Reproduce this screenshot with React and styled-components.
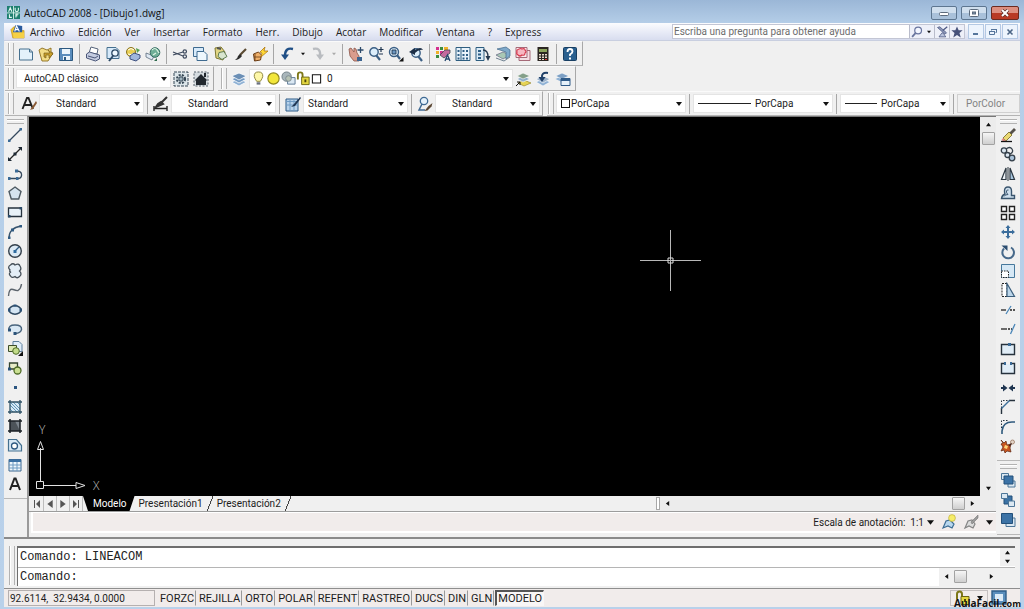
/// imports

import React, { useState } from "react";
import styled, { createGlobalStyle, css } from "styled-components";

const ui = `Roboto, "Liberation Sans", sans-serif`;
const segoe = `"Open Sans", "Noto Sans", sans-serif`;

const GlobalStyle = createGlobalStyle`
  * {
    box-sizing: border-box;
  }
  body {
    margin: 0;
    background: #b9d1ea;
    font-family: ${ui};
    font-size: 10px;
    color: #1c1c1c;
  }
  button, input, select {
    font: inherit;
    color: inherit;
    margin: 0;
    padding: 0;
    border: 0;
    border-radius: 0;
    background: none;
    outline: none;
  }
`;

// every drawing lives in a 16x16 box
const icons = {
  logo: (
    <>
      <rect width="16" height="16" fill="#1d7f70" />
      <path d="M8 0v16M0 8.500h16" stroke="#e6fbf5" strokeWidth="1" />
      <path d="M2 7l2-5 2 5M10 2v3q0 2 2 2t2-2V2M3 10v4h3M11 14v-4h3M11 12h2" stroke="#e6fbf5" strokeWidth="1.300" fill="none" />
    </>
  ),
  doc: (
    <>
      <path d="M1 6l3-3h3l3 4h5v8H3z" fill="#f0c52c" stroke="#b8860f" strokeWidth=".6" />
      <path d="M3 9l3-8 7 1v7z" fill="#2a5b9e" />
      <path d="M5 8l2-6 3 6M6 6h3" stroke="#fff" fill="none" strokeWidth="1.200" />
      <path d="M3 9h12v6H4z" fill="#f5d046" />
    </>
  ),
  new: <path d="M1.500 3h10l3 3v8h-13zM11.500 3v3h3" fill="#e3f1fb" stroke="#46708f" />,
  open: (
    <>
      <path d="M1 4l3-2 5 2 4-2v4l2 1-5 8H4z" fill="#f2dc86" stroke="#8c6d1e" strokeWidth=".9" />
      <path d="M6 11V7h6l-2-3 5 4-4 4V9H8v3z" fill="#c89f2a" stroke="#6d5415" strokeWidth=".6" />
    </>
  ),
  save: (
    <>
      <path d="M1.500 2.500h13v12h-13z" fill="#5a8dbd" stroke="#2c587f" />
      <path d="M4 3h8v5H4zM5 10h7v4H5z" fill="#eaf4fb" />
      <path d="M6 11h2v3H6z" fill="#2c587f" />
    </>
  ),
  print: (
    <>
      <path d="M4 7l2-6 7 2-1 5z" fill="#fff" stroke="#55637a" />
      <path d="M1.500 8l3-2 10 3v4l-4 2-9-3z" fill="#c3cbe0" stroke="#4a5678" />
      <path d="M3 10l7 2 3-2" stroke="#4a5678" fill="none" />
    </>
  ),
  preview: (
    <>
      <path d="M2 1.500h9l3 3v8H2z" fill="#d7eafa" stroke="#46708f" />
      <circle cx="10" cy="7" r="3.200" fill="#eef8ff" stroke="#2d4a66" strokeWidth="1.300" />
      <path d="M8 10l-4 5" stroke="#2d4a66" strokeWidth="2" />
    </>
  ),
  publish: (
    <>
      <circle cx="6" cy="6" r="4.500" fill="#e9cf52" stroke="#8a7420" />
      <path d="M3 4q3-3 6 0M3 8q3 2 6-1" stroke="#fff" fill="none" />
      <path d="M5 10l4-3 6 2v3l-4 3-6-2z" fill="#9fb6dc" stroke="#3c4f7e" />
      <path d="M11 2l4 2-3 3z" fill="#56a04e" />
    </>
  ),
  globe: (
    <>
      <path d="M1 7l8 3-2 4-6-3z" fill="#dfe9f3" stroke="#5a6b7c" strokeWidth=".8" />
      <circle cx="10" cy="6.500" r="4.800" fill="#6fae97" stroke="#356b62" />
      <path d="M7 4q3-3 5 0t2 3M8 9l3-2" stroke="#dff3e4" fill="none" strokeWidth="1.200" />
      <path d="M9 15l3-3v3z" fill="#2f6a4d" />
    </>
  ),
  cut: (
    <>
      <path d="M1 6l10 4M1 9l10-3" stroke="#3e4a5e" strokeWidth="1.200" />
      <circle cx="12.800" cy="5.500" r="1.700" fill="none" stroke="#3e4a5e" strokeWidth="1.200" />
      <circle cx="12.800" cy="10.500" r="1.700" fill="none" stroke="#3e4a5e" strokeWidth="1.200" />
    </>
  ),
  copy: (
    <>
      <path d="M1.500 1.500h10v9h-10z" fill="#d7eafa" stroke="#3f6b90" />
      <path d="M5 5.500h7l3 3v6H5z" fill="#eef7fd" stroke="#3f6b90" />
    </>
  ),
  paste: (
    <>
      <path d="M3 2l6-1 4 5-2 8-7-2z" fill="#e2d684" stroke="#7d7630" />
      <path d="M5 2l4 1" stroke="#555" strokeWidth="2" />
      <path d="M7 6.500l5-1 3 5-5 3-4-3z" fill="#d8e5cf" stroke="#5d7a50" />
    </>
  ),
  brush: (
    <>
      <path d="M14 3L8 9" stroke="#5b4a32" strokeWidth="2.200" />
      <path d="M8 8l2 2q-3 4-7 4 3-2 3-4z" fill="#2b2b2b" />
    </>
  ),
  bolt: (
    <>
      <path d="M1.500 8l5-2 3 3-1 5-6 1z" fill="#efb06a" stroke="#6a3c14" />
      <path d="M3 8v7M2 11h7" stroke="#6a3c14" strokeWidth=".8" />
      <path d="M8 6l5-5-1 4h4l-7 6 1-4z" fill="#ffd937" stroke="#b07812" strokeWidth=".8" />
    </>
  ),
  undo: (
    <>
      <path d="M14 3Q6 1 6 10" fill="none" stroke="#1f4f86" strokeWidth="2.400" />
      <path d="M2 8.500h8L6 14z" fill="#1f4f86" />
    </>
  ),
  redo: (
    <>
      <path d="M3 3q8-2 7 7" fill="none" stroke="#b9bcc0" strokeWidth="2.400" />
      <path d="M14 8.500H6l4 5.500z" fill="#b9bcc0" />
    </>
  ),
  pan: (
    <>
      <path d="M1 3l2-1 3 4V2l2 1 1 4 2 3v5H6L2 10z" fill="#d99c8d" stroke="#8c5448" strokeWidth=".8" />
      <path d="M12.500 1v6M9.500 4h6" stroke="#2c4a6b" strokeWidth="1.300" />
      <path d="M9 11h5v4H9z" fill="#3a638f" />
    </>
  ),
  zoomRt: (
    <>
      <circle cx="6" cy="6" r="4.200" fill="#dceefb" stroke="#3b5f84" strokeWidth="1.400" />
      <path d="M8 9l4 5" stroke="#3b5f84" strokeWidth="2.200" />
      <path d="M13 1v5M10.500 3.500h5M11 8h4" stroke="#1f3550" strokeWidth="1.200" />
    </>
  ),
  zoomWin: (
    <>
      <circle cx="6" cy="6" r="4.500" fill="#dceefb" stroke="#3b5f84" strokeWidth="1.400" />
      <path d="M4 4h4v4H4z" fill="#6b96c0" stroke="#1f3550" strokeWidth=".9" />
      <path d="M9 9l3 4" stroke="#3b5f84" strokeWidth="2.200" />
      <path d="M15.500 11v4.500H11z" />
    </>
  ),
  zoomPrev: (
    <>
      <circle cx="8" cy="7" r="4.200" fill="#dceefb" stroke="#3b5f84" strokeWidth="1.400" />
      <path d="M10 10l4 5" stroke="#3b5f84" strokeWidth="2.200" />
      <path d="M1 6l6-4v2q6-4 8 0-4-1-8 3v2z" fill="#1c2f47" />
    </>
  ),
  props: (
    <>
      <path d="M1 1h3v3H1zM5 5h3v3H5z" fill="#d42f8e" />
      <path d="M5 1h3v3H5zM1 9h3v3H1z" fill="#3b8c3f" />
      <path d="M9 1h4v3H9zM1 5h3v3H1z" fill="#f0b228" />
      <path d="M5 9l5-5h5v3l-6 5z" fill="#c46a9d" stroke="#40474f" strokeWidth=".8" />
      <path d="M10 15l2.500-6 2.500 6M11 13h3" stroke="#26476e" fill="none" strokeWidth="1.300" />
    </>
  ),
  center: (
    <>
      <path d="M1 1.500h14v13H1z" fill="#e9f3fb" stroke="#2e5e80" />
      <path d="M6 2v12" stroke="#2e5e80" />
      <path d="M2.500 4h2v2h-2zM2.500 8h2v2h-2zM7.500 4h2v2h-2zM11 4h2v2h-2zM7.500 8h2v2h-2zM11 8h2v2h-2zM7.500 11.500h2v2h-2zM11 11.500h2v2h-2zM2.500 11.500h2v2h-2z" fill="#2f5f86" />
    </>
  ),
  palettes: (
    <>
      <path d="M1 1.500h8v13H1z" fill="#dcebf6" stroke="#2e5e80" />
      <path d="M3 4h3v2H3zM3 7.500h3v2H3zM3 11h3v2H3z" fill="#2f5f86" />
      <path d="M8 4q5 0 5 7" fill="none" stroke="#24384e" strokeWidth="1.300" />
      <path d="M10.500 10h5L13 15z" fill="#24384e" />
    </>
  ),
  sheets: (
    <>
      <path d="M1 9l7-3 7 3-7 4z" fill="#a9c7b5" stroke="#557" strokeWidth=".6" />
      <path d="M2 3l9-2 4 3v6l-4 3V6z" fill="#7fa9ca" stroke="#42688a" strokeWidth=".7" />
      <path d="M1 12l8 3 6-4" stroke="#6f8190" fill="none" />
    </>
  ),
  markup: (
    <>
      <path d="M4 4.500h11v10H4z" fill="#f5dfe4" stroke="#a56a78" />
      <path d="M1 1.500h11v10H1z" fill="#fbecef" stroke="#a56a78" />
      <path d="M4 3q2-1 3 0 3-1 3 1 2 2 0 3 0 3-3 2-2 2-4 0-2-1-1-3-1-2 2-3z" fill="#f7b8c2" stroke="#d63b50" strokeWidth="1.200" />
    </>
  ),
  calc: (
    <>
      <path d="M2.500 1h11v14h-11z" fill="#2b2622" />
      <path d="M4 3h8v3H4z" fill="#8ba35c" />
      <path d="M4 8h2v1.500H4zM7 8h2v1.500H7zM10 8h2v1.500h-2zM4 10.500h2V12H4zM7 10.500h2V12H7zM10 10.500h2V12h-2zM4 13h2v1H4zM7 13h2v1H7z" fill="#e8ddcf" />
      <path d="M10 13h2v1h-2z" fill="#d33" />
    </>
  ),
  help: (
    <>
      <rect x="1.500" y="1.500" width="13" height="13" rx="1" fill="#2a608f" stroke="#183f63" />
      <path d="M5.500 6q0-3 2.500-3t2.500 2.500Q10.500 7 8 8.500V10" stroke="#fff" strokeWidth="1.800" fill="none" />
      <path d="M7 11.500h2v2H7z" fill="#fff" />
    </>
  ),
  gear: (
    <>
      <path d="M1 1h14v14H1z" fill="#dde6ea" stroke="#344654" strokeDasharray="3 1" />
      <circle cx="8" cy="8" r="4" fill="none" stroke="#344654" strokeWidth="2.200" strokeDasharray="2 1.200" />
      <circle cx="8" cy="8" r="2.200" fill="#9fb4bf" stroke="#344654" />
    </>
  ),
  home: (
    <>
      <path d="M1 1h14v14H1z" fill="#d5dbdf" stroke="#56616a" strokeDasharray="2 1.500" />
      <path d="M2 9l6-6 6 6-1 1v4H3v-4z" fill="#22282e" />
      <path d="M11 2h2v4h-2z" fill="#22282e" />
    </>
  ),
  layers: (
    <>
      <path d="M0.500 11l7.500-3 7.500 3-7.500 4z" fill="#8fb1d4" stroke="#fff" strokeWidth=".8" />
      <path d="M0.500 8l7.500-3 7.500 3-7.500 4z" fill="#7199c2" stroke="#fff" strokeWidth=".8" />
      <path d="M0.500 5l7.500-3 7.500 3-7.500 4z" fill="#6b8fb5" stroke="#fff" strokeWidth=".8" />
    </>
  ),
  layerCur: (
    <>
      <path d="M3 12l6-3 7 3-7 3z" fill="#e6d354" stroke="#8d7d20" strokeWidth=".6" />
      <path d="M2 8l6-3 7 3-7 3z" fill="#8faec9" stroke="#fff" strokeWidth=".6" />
      <path d="M2 5l6-3 7 3-7 3z" fill="#84a08a" stroke="#fff" strokeWidth=".6" />
      <path d="M1 15l4-4M2 11h3v3" stroke="#111" fill="none" />
    </>
  ),
  layerPrev: (
    <>
      <path d="M1 11l7-3 7 3-7 4z" fill="#8fb1d4" stroke="#fff" strokeWidth=".6" />
      <path d="M1 8l7-3 7 3-7 4z" fill="#9db3cb" stroke="#fff" strokeWidth=".6" />
      <path d="M13 2Q6 1 7 7" fill="none" stroke="#1f4069" strokeWidth="2" />
      <path d="M3.500 6h7L7 11z" fill="#1f4069" />
    </>
  ),
  layerState: (
    <>
      <path d="M0.500 8l6.500-3 7 3-7 3z" fill="#8fb1d4" />
      <path d="M0.500 5l6.500-3 7 3-7 3z" fill="#7c9fc4" stroke="#fff" strokeWidth=".6" />
      <path d="M6 7.500h9v7H6z" fill="#e6f1fa" stroke="#2e5a88" />
      <path d="M6 8h9v2H6z" fill="#2e5a88" />
    </>
  ),
  bulb: (
    <>
      <path d="M8 1q5 0 4.500 5Q12 8 10 11H6Q4 8 3.500 6 3 1 8 1z" fill="#fdf7a8" stroke="#8b8237" />
      <path d="M6 12h4v2.500H6z" fill="#6b7280" />
    </>
  ),
  sun: <circle cx="8" cy="8" r="6" fill="#f2e63a" stroke="#8f861c" strokeWidth="1.200" />,
  freeze: (
    <>
      <circle cx="6" cy="6" r="5" fill="#a9b6bb" stroke="#718087" />
      <path d="M7 7h8v7H7z" fill="#dbe8f3" stroke="#5d7894" />
      <circle cx="8" cy="8" r="3" fill="#b7c3b5" stroke="#718087" strokeWidth=".8" />
    </>
  ),
  lock: (
    <>
      <path d="M2 9V4q0-2.500 2.500-2.500T7 4v3" fill="none" stroke="#7d7718" strokeWidth="2" />
      <path d="M6 6.500h8v8H6z" fill="#e3d640" stroke="#6c6612" />
      <path d="M9 9h2v3H9z" fill="#4d480b" />
    </>
  ),
  swatch: <path d="M2 2.500h12v12H2z" fill="#fff" stroke="#111" strokeWidth="1.500" />,
  textStyle: (
    <>
      <path d="M1.500 13L6 2h1.500L12 13M3.500 9h6.500" fill="none" stroke="#222" strokeWidth="1.900" />
      <path d="M15 5l-4 6-2 3 3-1 4-6z" fill="#8a5a34" />
    </>
  ),
  dimStyle: (
    <>
      <path d="M1 10v5M14 10v5M1 12.500h13" stroke="#222" strokeWidth="1.400" />
      <path d="M14 1L8 7M8 6l2 2-7 3 2-3z" stroke="#333" strokeWidth="2" fill="#333" />
    </>
  ),
  tableStyle: (
    <>
      <path d="M1 3h12v12H1z" fill="#b8d2ea" stroke="#2d5a86" />
      <path d="M1 5.500h12M1 9h12M5 3v12M9 3v12" stroke="#6f9bc4" />
      <path d="M15 1L9 8l-3 3 4-1 6-8z" fill="#1e3552" />
    </>
  ),
  leaderStyle: (
    <>
      <circle cx="7" cy="5" r="3.700" fill="#e4f1fb" stroke="#3f6a94" strokeWidth="1.300" />
      <path d="M5 8l-3 6h6" stroke="#3f6a94" strokeWidth="1.500" fill="none" />
      <path d="M15.500 7l-4 3-4 5 3-.5 4-4z" fill="#5a4632" />
    </>
  ),
  line: (
    <>
      <path d="M2 14L14 2" stroke="#33475c" strokeWidth="1.300" />
      <path d="M1 12.500h2.500V15H1zM12.500 1H15v2.500h-2.500z" fill="#3a6a96" />
    </>
  ),
  xline: (
    <>
      <path d="M2 14L14 2" stroke="#222" strokeWidth="1.300" />
      <path d="M1 15v-4l4 4zM15 1v4l-4-4zM6.500 6.500h3v3h-3z" fill="#1d2833" />
    </>
  ),
  pline: (
    <>
      <path d="M1 12.500h11q3-1 2.500-4.500-.5-3-5-3" fill="none" stroke="#33475c" strokeWidth="1.300" />
      <path d="M1 11h2.500v3H1zM9 11h2.500v3H9zM8 3.500h3v3H8z" fill="#3a6a96" />
    </>
  ),
  polygon: <path d="M8 2l6 4.500-2.300 7.500H4.300L2 6.500z" fill="#d5e3ee" stroke="#4d5961" strokeWidth="1.400" />,
  rect: (
    <>
      <path d="M1.500 4h13v8.500h-13z" fill="#e8f1f8" stroke="#26323d" strokeWidth="1.300" />
      <path d="M1 11h2.500v2.500H1zM12.500 3H15v2.500h-2.500z" fill="#2b4a68" />
    </>
  ),
  arc: (
    <>
      <path d="M2 14Q2 4 14 2" fill="none" stroke="#3a556e" strokeWidth="1.400" />
      <path d="M1 12.500h2.500V15H1zM4 4.500h3v3H4zM12.500 1H15v2.500h-2.500z" fill="#2f5a82" />
    </>
  ),
  circle: (
    <>
      <circle cx="8" cy="8" r="6.300" fill="#dbe9f4" stroke="#333f4a" strokeWidth="1.400" />
      <path d="M8 8l4-4" stroke="#2f5a82" strokeWidth="1.300" />
      <path d="M6.500 7h3v3h-3z" fill="#2f6ca0" />
    </>
  ),
  cloud: <path d="M3 7Q0 4 3.500 2 6-.5 8 2q4-2 5 1 2 3-.5 5 3 3 0 5.500-2.500 2.500-4.500 0Q5 15.500 3.500 13 1 10.500 4 9 2 9 3 7z" fill="#e4eef6" stroke="#454f58" strokeWidth="1.300" />,
  spline: <path d="M1.500 14Q2 6 6 7.500t5 1q3-2 3.500-6.500" fill="none" stroke="#5c646c" strokeWidth="1.400" />,
  ellipse: (
    <>
      <ellipse cx="8" cy="8" rx="6" ry="4.200" fill="#d4e5f3" stroke="#2e4860" strokeWidth="1.500" />
      <path d="M1 6.500h2.500v3H1zM12.500 6.500H15v3h-2.500zM6.500 2.500h3v2h-3z" fill="#2a5279" />
    </>
  ),
  earc: (
    <>
      <path d="M2 9Q1 4 8 4q7 0 6.500 4.500Q14 12 8 12.500" fill="#d9e8f4" stroke="#48637c" strokeWidth="1.500" />
      <path d="M1 7.500h3v3H1zM6.500 11h3v3h-3z" fill="#2a5279" />
    </>
  ),
  insert: (
    <>
      <path d="M6 1.500h6l3 3v7H6z" fill="#e0eefa" stroke="#5d7f9d" />
      <path d="M1.500 5.500h8v6h-8z" fill="#dbe8b0" stroke="#3d4d2a" />
      <circle cx="9" cy="11" r="3.300" fill="#c3dc8a" stroke="#4d6a26" />
      <path d="M16 11v5h-5z" />
    </>
  ),
  block: (
    <>
      <path d="M2.500 3h8v6h-8z" fill="#e7ecc8" stroke="#33442f" strokeWidth="1.300" />
      <circle cx="10.500" cy="10.500" r="3.500" fill="#cbe093" stroke="#4d6a26" strokeWidth="1.300" />
      <path d="M1 7.500h3v3H1z" fill="#2a5279" />
    </>
  ),
  point: <path d="M7 7h3v3H7z" fill="#2a5580" />,
  hatch: (
    <>
      <path d="M3 3h10v10H3z" fill="#d6e8f4" />
      <path d="M3 6l7 7M3 3l10 10M6 3l7 7M3 10l3 3M10 3l3 3" stroke="#5f97bb" />
      <path d="M3 1v14M13 1v14M1 3h14M1 13h14" stroke="#2f5266" strokeWidth="1.300" />
    </>
  ),
  gradient: (
    <>
      <path d="M3 3h10v10H3z" fill="#4c5359" />
      <path d="M8 3h5v10z" fill="#7c858d" />
      <path d="M3 1v14M13 1v14M1 3h14M1 13h14" stroke="#1b2126" strokeWidth="1.500" />
    </>
  ),
  region: (
    <>
      <path d="M1.500 2.500h8l5 6v5.500h-13z" fill="#d7e8f5" stroke="#44708f" strokeWidth="1.200" />
      <circle cx="7.500" cy="9" r="3" fill="#fff" stroke="#2f5a82" strokeWidth="1.300" />
    </>
  ),
  table: (
    <>
      <path d="M2 2.500h12v11.500H2z" fill="#eef6fc" stroke="#3a678f" />
      <path d="M2 2.500h12v2.500H2z" fill="#3a70a3" />
      <path d="M2 8h12M2 11h12M6 5v9M10 5v9" stroke="#6e9bc2" />
    </>
  ),
  mtext: <path d="M3 14L7.400 2.500h1.200L13 14M5 10h6" fill="none" stroke="#222" strokeWidth="2" />,
  erase: (
    <>
      <path d="M14 1L9 6l2 2 5-5z" fill="#55504a" />
      <path d="M9 5L3 11l3 3 6-6z" fill="#ead973" stroke="#6e6120" strokeWidth=".8" />
      <path d="M3 11l3 3H3L1.500 13z" fill="#e48b83" />
      <path d="M1 14.500h11" stroke="#111" strokeWidth="1.300" />
    </>
  ),
  copyObj: (
    <>
      <circle cx="4" cy="4.500" r="2.700" fill="#dbe6f0" stroke="#35404a" strokeWidth="1.300" />
      <path d="M6 3q4-3 6 0t-2 5" fill="none" stroke="#35404a" strokeWidth="1.300" />
      <circle cx="7.500" cy="9" r="2.500" fill="#dbe6f0" stroke="#35404a" strokeWidth="1.300" />
      <circle cx="12" cy="12" r="2.800" fill="#aac3da" stroke="#35404a" strokeWidth="1.300" />
    </>
  ),
  mirror: (
    <>
      <path d="M6 2v11.500H1.500z" fill="#eef3f7" stroke="#2b3640" strokeWidth="1.200" />
      <path d="M10 2v11.500h4.500z" fill="#a8c6df" stroke="#2b3640" strokeWidth="1.200" />
      <path d="M8 1v14" stroke="#2b3640" />
    </>
  ),
  offset: (
    <>
      <path d="M1.500 13.500h13v-3h-3V6q0-4-3.500-4T4.500 6q0 2 .5 3-3 1-3.500 4.500z" fill="#cfe0ee" stroke="#3a556e" strokeWidth="1.400" />
      <path d="M4 11.500q1-2 4-2Q6 8 6.500 6q.5-1.500 2-1" fill="none" stroke="#3a556e" />
    </>
  ),
  array: <path d="M1.500 1.500h5v5h-5zM9.500 1.500h5v5h-5zM1.500 9.500h5v5h-5zM9.500 9.500h5v5h-5z" fill="#fff" stroke="#222" strokeWidth="1.400" />,
  move: <path d="M8 1l2.500 3H9v3h3V5.500L15 8l-3 2.500V9H9v3h1.500L8 15l-2.500-3H7V9H4v1.500L1 8l3-2.500V7h3V4H5.500z" fill="#3b6d9c" />,
  rotate: (
    <>
      <path d="M4 4.500a5.800 5.800 0 1 0 7-1" fill="none" stroke="#47698a" strokeWidth="2" />
      <path d="M1.500 1.500h6V7z" fill="#2b4d70" />
    </>
  ),
  scale: (
    <>
      <path d="M1.500 1.500h13v13h-13z" fill="#d6e8f5" stroke="#46789c" />
      <path d="M1.500 8h7v6.500h-7z" fill="#fff" stroke="#222" strokeDasharray="1.500 1" />
    </>
  ),
  stretch: (
    <>
      <path d="M2 1.500h5v13H2z" fill="#fff" stroke="#222" strokeDasharray="2 1" />
      <path d="M7 1.500l7.500 13H7z" fill="#bcd6ea" stroke="#3b5f7d" strokeWidth="1.200" />
    </>
  ),
  trim: (
    <>
      <path d="M1 8h5" stroke="#222" strokeWidth="1.300" />
      <path d="M10 8h5" stroke="#222" strokeWidth="1.300" strokeDasharray="2 1" />
      <path d="M6 12l5-8" stroke="#4a86b8" strokeWidth="1.300" />
    </>
  ),
  extend: (
    <>
      <path d="M1 8h6" stroke="#222" strokeWidth="1.300" />
      <path d="M8 8h4" stroke="#222" strokeWidth="1.300" strokeDasharray="2 1" />
      <path d="M10.500 13l4.500-10" stroke="#4a86b8" strokeWidth="1.300" />
    </>
  ),
  breakPt: (
    <>
      <path d="M1.500 3.500h13v10h-13z" fill="#e0edf7" stroke="#26323d" strokeWidth="1.400" />
      <path d="M8 2h3v3H8z" fill="#3a6a96" />
    </>
  ),
  breakGap: (
    <>
      <path d="M2 4h12v9.500H2z" fill="#e0edf7" />
      <path d="M5 3.500H1.500v10h13v-10H11" fill="none" stroke="#26323d" strokeWidth="1.400" />
      <path d="M4 2h2v3H4zM10 2h2v3h-2z" fill="#3a6a96" />
    </>
  ),
  join: (
    <>
      <path d="M1 8h3M12 8h3" stroke="#1e3550" strokeWidth="2" />
      <path d="M3 4.500L7.500 8 3 11.500zM13 4.500L8.500 8l4.500 3.500z" fill="#1e3550" />
    </>
  ),
  chamfer: (
    <>
      <path d="M1.500 15V9M9 1.500h6" stroke="#26323d" strokeWidth="1.400" />
      <path d="M1.500 9V1.500H9" fill="none" stroke="#26323d" strokeDasharray="1.500 1.500" />
      <path d="M1.500 9.500l8-8" stroke="#3f7099" strokeWidth="1.400" />
    </>
  ),
  fillet: (
    <>
      <path d="M1.500 9V1.500H9" fill="none" stroke="#26323d" strokeDasharray="1.500 1.500" />
      <path d="M2 15v-3Q3 3 12 3h3" fill="none" stroke="#2f5a7d" strokeWidth="1.600" />
    </>
  ),
  explode: (
    <>
      <path d="M1 2l3 3 2-2 1 4 4-1-1 4 1 4-4-1-2 2-1-3-3 1 2-4-2-3 2-1z" fill="#c9561f" stroke="#5a2410" strokeWidth=".7" />
      <path d="M5 7l3 1-1 3-3-1z" fill="#ffd67a" />
      <circle cx="12.500" cy="4" r="2" fill="#e3d4c8" stroke="#9a7a63" strokeWidth=".8" />
      <path d="M9 8l2.500-2.500" stroke="#40231a" strokeWidth="1.300" />
    </>
  ),
  front: (
    <>
      <path d="M1.500 1.500h7v6h-7zM8 9h7v6H8z" fill="#dbe8f2" stroke="#4d7698" />
      <path d="M4 4h9v8H4z" fill="#3c73a6" stroke="#23507a" />
    </>
  ),
  back: (
    <>
      <path d="M4 4h8v8H4z" fill="#3c73a6" stroke="#23507a" />
      <path d="M1.500 1.500h6v5h-6zM8.500 9h6v5.500h-6z" fill="#dbe8f2" stroke="#4d7698" />
    </>
  ),
  above: (
    <>
      <path d="M6 6h9v8.500H6z" fill="#dbe8f2" stroke="#4d7698" />
      <path d="M1.500 1.500h11v10h-11z" fill="#3c73a6" stroke="#23507a" />
    </>
  ),
  search: (
    <>
      <circle cx="9.500" cy="6" r="4.500" fill="#f3f6ff" stroke="#68749e" strokeWidth="1.600" />
      <path d="M6 9.500L1.500 14.500" stroke="#68749e" strokeWidth="2.400" />
    </>
  ),
  comm: (
    <>
      <path d="M2 2l10 9 2-2L5 1z" fill="#8d97b8" stroke="#4a5580" />
      <path d="M15 1L9 6" stroke="#4a5580" strokeWidth="1.600" />
      <path d="M8 9l-4 5.500h9L10 10z" fill="#b9c2dc" stroke="#4a5580" />
    </>
  ),
  star: <path d="M8 .5l2.200 5H15.500l-4.200 3.700 1.700 6L8 12l-5 3.200 1.700-6L.5 5.500h5.300z" fill="#48527a" />,
  annoVis: (
    <>
      <path d="M2 14l3-7 4-1 4 4-2 4-4-2z" fill="#b9d7ee" stroke="#3d6d94" strokeWidth="1.200" />
      <circle cx="11" cy="4" r="3.400" fill="#f6ed6a" stroke="#b5a82c" strokeWidth=".6" />
    </>
  ),
  annoAuto: (
    <>
      <path d="M2 14l3-7 4-1 3 4-2 4-4-2z" fill="#dcdcdc" stroke="#858585" strokeWidth="1.200" />
      <path d="M15 1L8 8l1 2 6-6z" fill="#9a9a9a" stroke="#777" strokeWidth=".6" />
    </>
  ),
  clean: (
    <>
      <path d="M1 1h14v13H1z" fill="#5b8fbd" stroke="#2f5e89" strokeWidth="1.400" />
      <path d="M4 4h8v7H4z" fill="#dcebf7" />
    </>
  ),
};

function Icon({ name, size = 16 }) {
  return (
    <svg width={size} height={size} viewBox="0 0 16 16" fill="#111" aria-hidden="true">
      {icons[name]}
    </svg>
  );
}

function Arrow({ dir = "down", size = 6, color = "#111" }) {
  const shapes = {
    down: "M0 1h6L3 5z",
    up: "M0 5h6L3 1z",
    left: "M5 0v6L1 3z",
    right: "M1 0v6l4-3z",
  };
  return (
    <svg width={size} height={size} viewBox="0 0 6 6" fill={color} aria-hidden="true">
      <path d={shapes[dir]} />
    </svg>
  );
}

// combo box: optional picture in front, native select, black arrow
function Combo({ label, width, indent, options, lead, disabled }) {
  return (
    <ComboBox $width={width} $disabled={disabled}>
      {lead}
      <ComboSelect aria-label={label} $indent={indent} disabled={disabled}>
        {options.map((o) => (
          <option key={o}>{o}</option>
        ))}
      </ComboSelect>
      {!disabled && <Arrow />}
    </ComboBox>
  );
}

function Tools({ items }) {
  return items.map(([name, label], i) => {
    if (name === "|") return <Separator key={i} />;
    if (name === "v")
      return (
        <DropButton key={i} aria-label={label}>
          <Arrow size={4} color={label === "Lista rehacer" ? "#aaa" : "#111"} />
        </DropButton>
      );
    return (
      <ToolButton key={i} aria-label={label}>
        <Icon name={name} />
      </ToolButton>
    );
  });
}

const menus = ["Archivo", "Edición", "Ver", "Insertar", "Formato", "Herr.", "Dibujo", "Acotar", "Modificar", "Ventana", "?", "Express"];

const standardTools = [
  ["new", "Nuevo"],
  ["open", "Abrir"],
  ["save", "Guardar"],
  ["|"],
  ["print", "Trazar"],
  ["preview", "Vista preliminar"],
  ["publish", "Publicar"],
  ["globe", "3D DWF"],
  ["|"],
  ["cut", "Cortar"],
  ["copy", "Copiar"],
  ["paste", "Pegar"],
  ["brush", "Igualar propiedades"],
  ["bolt", "Editor de bloques"],
  ["|"],
  ["undo", "Deshacer"],
  ["v", "Lista deshacer"],
  ["redo", "Rehacer"],
  ["v", "Lista rehacer"],
  ["|"],
  ["pan", "Encuadre"],
  ["zoomRt", "Zoom tiempo real"],
  ["zoomWin", "Zoom ventana"],
  ["zoomPrev", "Zoom previo"],
  ["|"],
  ["props", "Propiedades"],
  ["center", "DesignCenter"],
  ["palettes", "Paletas de herramientas"],
  ["sheets", "Conjuntos de planos"],
  ["markup", "Marcas"],
  ["calc", "Calculadora"],
  ["|"],
  ["help", "Ayuda"],
];

const drawTools = [
  ["line", "Línea"],
  ["xline", "Línea auxiliar"],
  ["pline", "Polilínea"],
  ["polygon", "Polígono"],
  ["rect", "Rectángulo"],
  ["arc", "Arco"],
  ["circle", "Círculo"],
  ["cloud", "Nube de revisión"],
  ["spline", "Spline"],
  ["ellipse", "Elipse"],
  ["earc", "Arco elíptico"],
  ["insert", "Insertar bloque"],
  ["block", "Crear bloque"],
  ["point", "Punto"],
  ["hatch", "Sombreado"],
  ["gradient", "Degradado"],
  ["region", "Región"],
  ["table", "Tabla"],
  ["mtext", "Texto de líneas múltiples"],
];

const modifyTools = [
  ["erase", "Borrar"],
  ["copyObj", "Copiar objeto"],
  ["mirror", "Simetría"],
  ["offset", "Desfase"],
  ["array", "Matriz"],
  ["move", "Desplazar"],
  ["rotate", "Girar"],
  ["scale", "Escala"],
  ["stretch", "Estirar"],
  ["trim", "Recortar"],
  ["extend", "Alargar"],
  ["breakPt", "Partir en punto"],
  ["breakGap", "Partir"],
  ["join", "Juntar"],
  ["chamfer", "Chaflán"],
  ["fillet", "Empalme"],
  ["explode", "Descomponer"],
];

const orderTools = [
  ["front", "Traer al frente"],
  ["back", "Enviar atrás"],
  ["above", "Poner encima"],
];

const toggles = ["FORZC", "REJILLA", "ORTO", "POLAR", "REFENT", "RASTREO", "DUCS", "DIN", "GLN", "MODELO"];

export default function App() {
  const [active, setActive] = useState("MODELO");

  return (
    <Window>
      <GlobalStyle />

      {/* title bar */}
      <TitleBar>
        <Icon name="logo" size={13} />
        <Title>AutoCAD 2008 - [Dibujo1.dwg]</Title>
        <CaptionButton aria-label="Minimizar">
          <svg width="12" height="8" viewBox="0 0 12 8">
            <rect x="1.500" y="3.500" width="9" height="3" rx="1" fill="#fff" stroke="#5c6b7d" />
          </svg>
        </CaptionButton>
        <CaptionButton aria-label="Restaurar">
          <svg width="12" height="8" viewBox="0 0 12 8">
            <rect x="1.500" y=".5" width="9" height="7" rx="1" fill="#fff" stroke="#5c6b7d" />
            <rect x="4.500" y="3" width="3" height="2" fill="#7d93ab" stroke="#5c6b7d" />
          </svg>
        </CaptionButton>
        <CaptionButton $close aria-label="Cerrar">
          <svg width="12" height="8" viewBox="0 0 12 8">
            <path d="M3 1l6 6M9 1L3 7" stroke="#5c2a24" strokeWidth="3.400" />
            <path d="M3 1l6 6M9 1L3 7" stroke="#fff" strokeWidth="2" />
          </svg>
        </CaptionButton>
      </TitleBar>

      <Body>
        {/* menu bar */}
        <MenuBar>
          <Icon name="doc" size={15} />
          <MenuList>
            {menus.map((m) => (
              <MenuButton key={m}>{m}</MenuButton>
            ))}
          </MenuList>
          <HelpBox>
            <HelpInput aria-label="Ayuda" placeholder="Escriba una pregunta para obtener ayuda" />
            <HelpButton aria-label="Buscar">
              <Icon name="search" size={12} />
            </HelpButton>
            <HelpButton $narrow aria-label="Opciones de búsqueda">
              <Arrow size={4} />
            </HelpButton>
            <HelpButton aria-label="Centro de comunicaciones">
              <Icon name="comm" size={12} />
            </HelpButton>
            <HelpButton aria-label="Favoritos">
              <Icon name="star" size={12} />
            </HelpButton>
          </HelpBox>
          <ChildButton aria-label="Minimizar dibujo">
            <svg width="8" height="8" fill="none" stroke="#55759b" strokeWidth="2">
              <path d="M1 6h5" />
            </svg>
          </ChildButton>
          <ChildButton aria-label="Restaurar dibujo">
            <svg width="8" height="8" fill="none" stroke="#55759b">
              <path d="M2.500 2.500v-1h5v3h-1M.5 3.500h5v3h-5zM2 1.500h6M0 3.500h6" />
            </svg>
          </ChildButton>
          <ChildButton aria-label="Cerrar dibujo">
            <svg width="8" height="8" fill="none" stroke="#4b6485" strokeWidth="1.600">
              <path d="M1.500 1.500l5 5M6.500 1.500l-5 5" />
            </svg>
          </ChildButton>
        </MenuBar>

        {/* toolbars */}
        <Row>
          <Toolbar>
            <Grip />
            <Tools items={standardTools} />
          </Toolbar>
        </Row>
        <Row>
          <Toolbar>
            <Grip />
            <Combo label="Espacio de trabajo" width={155} indent={7} options={["AutoCAD clásico"]} />
            <Tools items={[["gear", "Parámetros"], ["home", "Mi espacio de trabajo"]]} />
          </Toolbar>
          <Toolbar>
            <Grip />
            <Tools items={[["layers", "Propiedades de capas"]]} />
            <Combo
              label="Capa"
              width={264}
              indent={5}
              options={["0"]}
              lead={
                <LayerState>
                  <Icon name="bulb" size={15} />
                  <Icon name="sun" size={15} />
                  <Icon name="freeze" size={15} />
                  <Icon name="lock" size={15} />
                  <Icon name="swatch" size={11} />
                </LayerState>
              }
            />
            <Tools
              items={[
                ["layerCur", "Definir capa actual"],
                ["layerPrev", "Capa previa"],
                ["layerState", "Estados de capas"],
              ]}
            />
          </Toolbar>
        </Row>
        <Row>
          <Toolbar $roomy>
            <Grip />
            <Tools items={[["textStyle", "Estilo de texto"]]} />
            <Combo label="Estilo de texto" width={105} indent={16} options={["Standard"]} />
            <Tools items={[["|"], ["dimStyle", "Estilo de cota"]]} />
            <Combo label="Estilo de cota" width={105} indent={16} options={["Standard"]} />
            <Tools items={[["|"], ["tableStyle", "Estilo de tabla"]]} />
            <Combo label="Estilo de tabla" width={105} indent={4} options={["Standard"]} />
            <Tools items={[["|"], ["leaderStyle", "Estilo de directriz"]]} />
            <Combo label="Estilo de directriz" width={105} indent={16} options={["Standard"]} />
          </Toolbar>
          <Toolbar $grow>
            <Grip />
            <Combo label="Color" width={130} indent={1} options={["PorCapa"]} lead={<ColorSwatch />} />
            <Separator />
            <Combo label="Tipo de línea" width={140} indent={4} options={["PorCapa"]} lead={<LineSample $width={53} />} />
            <Separator />
            <Combo label="Grosor de línea" width={110} indent={4} options={["PorCapa"]} lead={<LineSample $width={32} />} />
            <Separator />
            <Combo label="Estilo de trazado" indent={8} options={["PorColor"]} disabled />
          </Toolbar>
        </Row>

        {/* work area */}
        <Workspace>
          <SideColumn>
            <SideBar $fill>
              <Grip $flat />
              <Tools items={drawTools} />
            </SideBar>
            <SideRest />
          </SideColumn>

          <Center>
            <ViewRow>
              <Canvas>
                <Crosshair width="61" height="61" fill="none" stroke="#b8b8b8">
                  <path d="M0 30.500h61" />
                  <path d="M30.500 0v61" />
                  <path d="M28 28h5v5h-5z" stroke="#dcdcdc" />
                </Crosshair>
                <Ucs width="70" height="72" fill="none" stroke="#e2e2e2">
                  <path d="M.5 60.500h7v7h-7zM4.500 60V27M4.500 20.500L1.500 28.500h6zM8 64.500h32M49 64.500l-9-3v6z" />
                  <text x="3" y="13">Y</text>
                  <text x="57" y="69">X</text>
                </Ucs>
              </Canvas>
              <VScroll>
                <ScrollButton aria-label="Subir">
                  <Arrow dir="up" size={5} />
                </ScrollButton>
                <Thumb />
                <Spacer />
                <ScrollButton aria-label="Bajar">
                  <Arrow size={5} />
                </ScrollButton>
              </VScroll>
            </ViewRow>

            <TabRow>
              <TabNav aria-label="Primera">
                <svg width="8" height="8" fill="#555">
                  <path d="M1 0h1v8H1zM7 0v8L3 4z" />
                </svg>
              </TabNav>
              <TabNav aria-label="Anterior">
                <Arrow dir="left" size={8} color="#555" />
              </TabNav>
              <TabNav aria-label="Siguiente">
                <Arrow dir="right" size={8} color="#555" />
              </TabNav>
              <TabNav aria-label="Última">
                <svg width="8" height="8" fill="#555">
                  <path d="M6 0h1v8H6zM1 0v8l4-4z" />
                </svg>
              </TabNav>
              <Tab $active>Modelo</Tab>
              <Tab>Presentación1</Tab>
              <Slash />
              <Tab>Presentación2</Tab>
              <Slash />
              <Spacer />
              <HScroll>
                <Splitter />
                <ScrollButton aria-label="Izquierda">
                  <Arrow dir="left" size={5} />
                </ScrollButton>
                <Spacer />
                <Thumb />
                <ScrollButton aria-label="Derecha">
                  <Arrow dir="right" size={5} />
                </ScrollButton>
              </HScroll>
            </TabRow>

            <ScaleBar>
              <span>Escala de anotación:</span>
              <ScaleButton>
                1:1 <Arrow size={7} />
              </ScaleButton>
              <Tools items={[["annoVis", "Visibilidad de anotación"], ["annoAuto", "Escala automática"]]} />
              <ScaleButton aria-label="Menú">
                <Arrow size={7} />
              </ScaleButton>
            </ScaleBar>
          </Center>

          <SideColumn>
            <SideBar $fill>
              <Grip $flat />
              <Tools items={modifyTools} />
            </SideBar>
            <SideBar>
              <Grip $flat />
              <Tools items={orderTools} />
            </SideBar>
          </SideColumn>
        </Workspace>

        {/* command line */}
        <CommandArea>
          <Grip />
          <CommandBox>
            <CommandLine>
              <span>Comando: LINEACOM</span>
              <MiniScroll>
                <ScrollButton aria-label="Historial arriba">
                  <Arrow dir="up" size={5} />
                </ScrollButton>
                <ScrollButton aria-label="Historial abajo">
                  <Arrow size={5} />
                </ScrollButton>
              </MiniScroll>
            </CommandLine>
            <CommandLine>
              <label htmlFor="cmd">Comando:</label>
              <CommandInput id="cmd" />
              <CommandScroll>
                <ScrollButton aria-label="Comando izquierda">
                  <Arrow dir="left" size={5} />
                </ScrollButton>
                <Thumb />
                <Spacer />
                <ScrollButton aria-label="Comando derecha">
                  <Arrow dir="right" size={5} />
                </ScrollButton>
              </CommandScroll>
            </CommandLine>
          </CommandBox>
        </CommandArea>

        {/* status bar */}
        <StatusBar>
          <Coords>92.6114,&nbsp; 32.9434, 0.0000</Coords>
          {toggles.map((t) => (
            <Toggle key={t} $active={t === active} onClick={() => setActive(t)}>
              {t}
            </Toggle>
          ))}
          <Spacer />
          <Tray>
            <Icon name="lock" />
            <Spacer />
            <Arrow />
          </Tray>
          <ToolButton aria-label="Limpiar pantalla">
            <Icon name="clean" />
          </ToolButton>
        </StatusBar>
      </Body>
      <Watermark>
        AulaFacil<small>.com</small>
      </Watermark>
    </Window>
  );
}

// window frame

const Window = styled.div`
  position: relative;
  display: flex;
  flex-direction: column;
  height: 100vh;
  overflow: hidden;
  background: linear-gradient(#9bb7d7, #b5cee8 24px, #b9d1ea);
`;

const TitleBar = styled.header`
  display: flex;
  align-items: center;
  gap: 4px;
  height: 23px;
  padding: 2px 5px 0 7px;
`;

const Title = styled.h1`
  flex: 1;
  margin: 0;
  font: 10px ${segoe};
  color: #111;
`;

const CaptionButton = styled.button`
  display: flex;
  align-items: center;
  justify-content: center;
  width: 26px;
  height: 14px;
  border: 1px solid #5d7690;
  border-radius: 2px;
  background: linear-gradient(#d0dfee 50%, #a9c1da 50%);
  ${(p) =>
    p.$close &&
    css`
      width: 28px;
      border-color: #6b2a20;
      background: linear-gradient(#dd8f80 50%, #b93a25 50%);
    `}
`;

const Body = styled.main`
  flex: 1;
  display: flex;
  flex-direction: column;
  min-height: 0;
  margin: 0 4px 2px;
  background: #f0f0f0;
`;

// menu bar

const MenuBar = styled.nav`
  display: flex;
  align-items: center;
  height: 18px;
  padding: 0 1px 0 6px;
  border-bottom: 1px solid #c9cfe0;
  background: linear-gradient(#fbfcfe, #e9ecf7 50%, #d8ddef);
`;

const MenuList = styled.div`
  flex: 1;
  display: flex;
  gap: 13px;
  padding-left: 5px;
`;

const MenuButton = styled.button`
  font: 10px ${segoe};
  color: #222;
`;

const HelpBox = styled.div`
  display: flex;
  height: 15px;
  margin-right: 3px;
  border: 1px solid #c3c6d4;
  background: #fff;
`;

const HelpInput = styled.input`
  width: 236px;
  padding-left: 1px;
  &::placeholder {
    color: #6d6d6d;
    opacity: 1;
  }
`;

const HelpButton = styled.button`
  display: flex;
  align-items: center;
  justify-content: center;
  width: ${(p) => (p.$narrow ? 10 : 15)}px;
  border-left: ${(p) => (p.$narrow ? 0 : 1)}px solid #b9bccb;
  background: #eef0f9;
`;

const ChildButton = styled.button`
  display: flex;
  align-items: center;
  justify-content: center;
  width: 16px;
  height: 15px;
  margin-right: 1px;
  border: 1px solid #b4c9e4;
  background: #edf4fd;
`;

// toolbars

const Row = styled.div`
  display: flex;
  height: 25px;
  gap: 4px;
  padding-left: 1px;
`;

const Grip = styled.span`
  flex: none;
  width: 6px;
  align-self: stretch;
  margin: 1px 2px 1px 1px;
  border: solid #b2b2b2;
  border-width: 0 1px;
  box-shadow: inset 1px 0 #fff;
  ${(p) =>
    p.$flat &&
    css`
      width: auto;
      height: 5px;
      margin: 2px 2px 1px;
      border-width: 1px 0;
      box-shadow: inset 0 1px #fff;
    `}
`;

const Toolbar = styled.div`
  display: flex;
  align-items: center;
  padding: 0 2px;
  border-right: 1px solid #a8a8a8;
  border-bottom: 1px solid #b4b4b4;
  border-top: 1px solid #fafafa;
  ${(p) =>
    p.$roomy &&
    css`
      ${Grip} {
        margin-right: 5px;
      }
    `}
  ${(p) =>
    p.$grow &&
    css`
      flex: 1;
      min-width: 0;
      padding: 0;
      border-right: 0;
    `}
`;

const Separator = styled.span`
  flex: none;
  width: 1px;
  height: 20px;
  margin: 0 3px;
  background: #a6a6a6;
`;

const ToolButton = styled.button`
  flex: none;
  display: flex;
  align-items: center;
  justify-content: center;
  width: 20px;
  height: 20px;
`;

const DropButton = styled(ToolButton)`
  width: 11px;
`;

const ComboBox = styled.span`
  display: flex;
  align-items: center;
  flex: ${(p) => (p.$width ? "none" : "1")};
  width: ${(p) => (p.$width ? p.$width + "px" : "auto")};
  min-width: 0;
  height: 19px;
  padding-right: ${(p) => (p.$disabled ? 0 : 3)}px;
  border: 1px solid ${(p) => (p.$disabled ? "#d0d0d0" : "#e4e4e4")};
  background: ${(p) => (p.$disabled ? "#f0f0f0" : "#fff")};
`;

const ComboSelect = styled.select`
  flex: 1;
  min-width: 0;
  height: 17px;
  padding-left: ${(p) => p.$indent}px;
  appearance: none;
  color: #1c1c1c;
  &:disabled {
    color: #838383;
    opacity: 1;
  }
`;

const LayerState = styled.span`
  display: flex;
  align-items: center;
  padding-left: 1px;
`;

const ColorSwatch = styled.span`
  width: 9px;
  height: 9px;
  margin-left: 4px;
  border: 1px solid #111;
`;

const LineSample = styled.span`
  width: ${(p) => p.$width}px;
  height: 1px;
  margin-left: 4px;
  background: #222;
`;

// work area

const Workspace = styled.section`
  flex: 1;
  display: flex;
  min-height: 0;
  border-bottom: 2px solid #8a8a8a;
`;

const SideColumn = styled.aside`
  flex: none;
  display: flex;
  flex-direction: column;
  width: 23px;
`;

const SideBar = styled.div`
  display: flex;
  flex-direction: column;
  padding: 1px 1px 4px;
  border-bottom: 1px solid #b8b8b8;
  flex: ${(p) => (p.$fill ? "1" : "none")};
  margin-bottom: ${(p) => (p.$fill ? 0 : 2)}px;
  min-height: 0;
  ${ToolButton} {
    flex: ${(p) => (p.$fill ? "1" : "none")};
    min-height: 0;
  }
`;

const SideRest = styled.div`
  height: 38px;
`;

const Center = styled.div`
  flex: 1;
  display: flex;
  flex-direction: column;
  min-width: 0;
  margin-right: 1px;
  border-left: 2px solid #9a9a9a;
  border-top: 1px solid #777;
`;

const ViewRow = styled.div`
  flex: 1;
  display: flex;
  min-height: 0;
`;

const Canvas = styled.div`
  position: relative;
  flex: 1;
  background: #000;
`;

const Crosshair = styled.svg`
  position: absolute;
  left: 611px;
  top: 113px;
`;

const Ucs = styled.svg`
  position: absolute;
  left: 7px;
  bottom: 3px;
  text {
    font: 300 12px "Open Sans", sans-serif;
    fill: #c4c4c4;
    stroke: none;
  }
`;

const Spacer = styled.span`
  flex: 1;
`;

const VScroll = styled.div`
  display: flex;
  flex-direction: column;
  align-items: center;
  width: 16px;
  background: #ececec;
`;

const ScrollButton = styled.button`
  display: flex;
  align-items: center;
  justify-content: center;
  width: 15px;
  height: 15px;
`;

const Thumb = styled.span`
  flex: none;
  width: 13px;
  height: 13px;
  border: 1px solid #a2a2a2;
  border-radius: 1px;
  background: linear-gradient(#f6f6f6, #cfcfcf);
`;

const TabRow = styled.div`
  display: flex;
  align-items: center;
  height: 16px;
  padding-left: 2px;
  border-bottom: 1px solid #9c9c9c;
  background: #f0f0f0;
`;

const TabNav = styled.button`
  display: flex;
  align-items: center;
  justify-content: center;
  width: 13px;
  height: 15px;
  border-right: 1px solid #bdbdbd;
`;

const Tab = styled.button`
  height: 15px;
  padding: 0 4px;
  ${(p) =>
    p.$active &&
    css`
      padding: 0 8px 0 10px;
      background: #000;
      color: #fff;
      clip-path: polygon(0 0, 100% 0, calc(100% - 5px) 100%, 5px 100%);
    `}
`;

const Slash = styled.span`
  width: 6px;
  height: 15px;
  background: linear-gradient(to bottom right, transparent 46%, #444 47%, #444 55%, transparent 56%);
`;

const HScroll = styled.div`
  display: flex;
  align-items: center;
  width: 340px;
  height: 15px;
  padding-right: 16px;
  background: #ececec;
`;

const Splitter = styled.span`
  width: 4px;
  height: 13px;
  border: 1px solid #a8a8a8;
  background: #fff;
`;

const ScaleBar = styled.div`
  display: flex;
  align-items: center;
  justify-content: flex-end;
  gap: 2px;
  height: 21px;
  margin: 0 0 4px 2px;
  border: solid #fff;
  border-width: 1px 0 2px 2px;
  background: #f1eceb;
`;

const ScaleButton = styled.button`
  display: flex;
  align-items: center;
  gap: 3px;
  padding: 0 3px;
`;

// command line

const CommandArea = styled.section`
  display: flex;
  height: 49px;
  padding: 6px 5px 2px 4px;
`;

const CommandBox = styled.div`
  flex: 1;
  display: flex;
  flex-direction: column;
  margin-top: 1px;
  border: solid #6e6e6e;
  border-width: 2px 0 0 1px;
  background: #fff;
`;

const CommandLine = styled.div`
  flex: 1;
  display: flex;
  align-items: center;
  justify-content: space-between;
  padding-left: 2px;
  font: 12px "Liberation Mono", monospace;
  color: #222;
  & + & {
    border-top: 1px solid #b5b5b5;
  }
`;

const MiniScroll = styled.span`
  display: flex;
  flex-direction: column;
  background: #f0f0f0;
  ${ScrollButton} {
    height: 9px;
  }
`;

const CommandInput = styled.input`
  flex: 1;
`;

const CommandScroll = styled.span`
  display: flex;
  align-items: center;
  align-self: stretch;
  width: 76px;
  padding-right: 16px;
  background: #f0f0f0;
`;

// status bar

const StatusBar = styled.footer`
  display: flex;
  align-items: center;
  gap: 1px;
  height: 19px;
  padding: 0 11px 0 4px;
  border-top: 1px solid #8e8e8e;
  background: #f1eceb;
  font-size: 11px;
`;

const Coords = styled.output`
  width: 147px;
  height: 16px;
  margin-right: 2px;
  padding-left: 1px;
  border: 1px solid #b5b0b0;
  font-size: 10px;
  line-height: 15px;
`;

const Toggle = styled.button`
  height: 16px;
  padding: 0 1px;
  border: 1px solid transparent;
  border-right-color: #9a9a9a;
  ${(p) =>
    p.$active &&
    css`
      border-color: #555 transparent transparent #555;
      border-width: 2px 1px 1px 2px;
      background: #f8f6f6;
    `}
`;

const Tray = styled.span`
  display: flex;
  align-items: center;
  width: 38px;
  height: 16px;
  padding: 0 4px;
  border: 1px solid #c5c0c0;
`;

const Watermark = styled.div`
  position: absolute;
  right: 3px;
  bottom: -1px;
  font: bold 10px/12px "Open Sans", sans-serif;
  color: #111;
  small {
    font-size: 9px;
  }
`;
